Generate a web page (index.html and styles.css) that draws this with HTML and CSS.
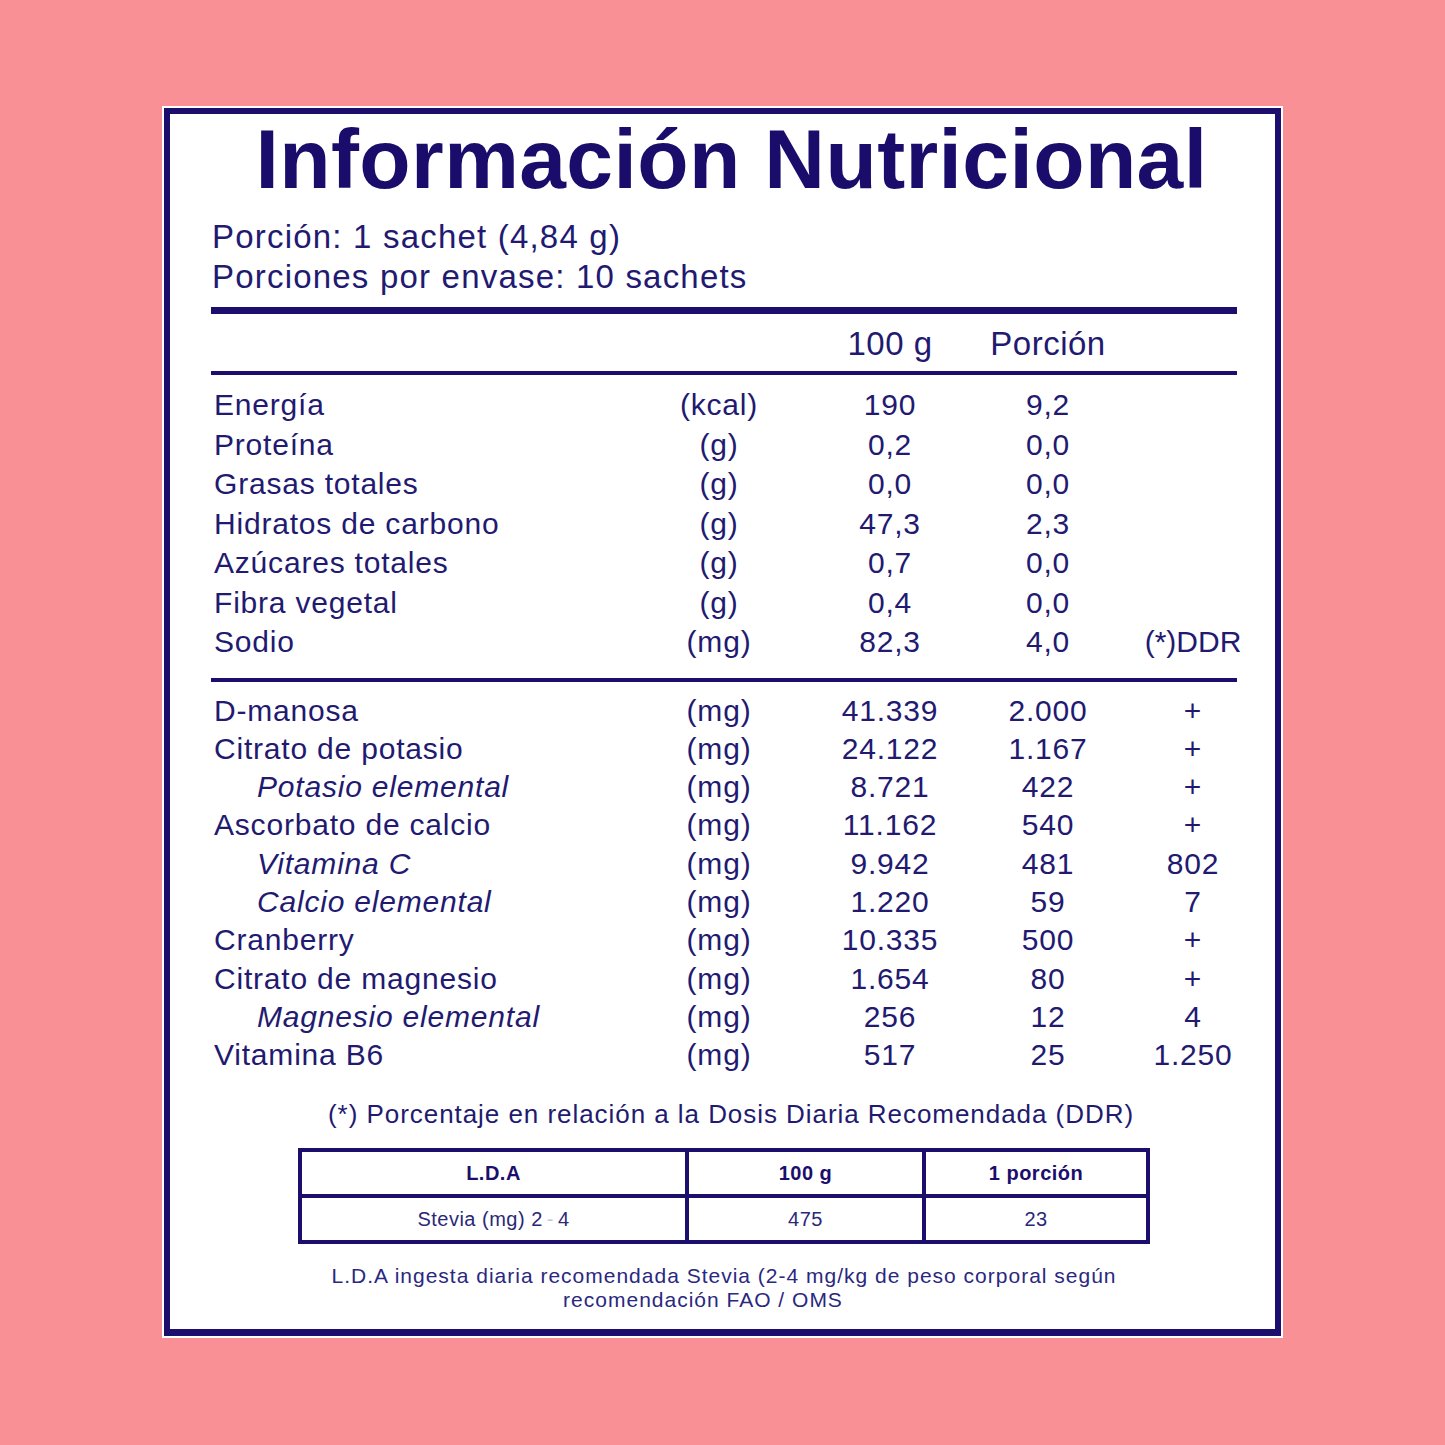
FILE: index.html
```html
<!DOCTYPE html>
<html lang="es">
<head>
<meta charset="utf-8">
<title>Información Nutricional</title>
<link rel="stylesheet" href="styles.css">
</head>
<body>
<div class="card">
  <div class="panel">
    <h1 class="title">Información Nutricional</h1>
    <div class="serving">
      <p>Porción: 1 sachet (4,84 g)</p>
      <p>Porciones por envase: 10 sachets</p>
    </div>
    <div class="rule thick"></div>
    <div class="row head"><span class="c-a">100 g</span><span class="c-p">Porción</span></div>
    <div class="rule"></div>
    <div class="section s1">
      <div class="row"><span class="c-n">Energía</span><span class="c-u">(kcal)</span><span class="c-a">190</span><span class="c-p">9,2</span></div>
      <div class="row"><span class="c-n">Proteína</span><span class="c-u">(g)</span><span class="c-a">0,2</span><span class="c-p">0,0</span></div>
      <div class="row"><span class="c-n">Grasas totales</span><span class="c-u">(g)</span><span class="c-a">0,0</span><span class="c-p">0,0</span></div>
      <div class="row"><span class="c-n">Hidratos de carbono</span><span class="c-u">(g)</span><span class="c-a">47,3</span><span class="c-p">2,3</span></div>
      <div class="row"><span class="c-n">Azúcares totales</span><span class="c-u">(g)</span><span class="c-a">0,7</span><span class="c-p">0,0</span></div>
      <div class="row"><span class="c-n">Fibra vegetal</span><span class="c-u">(g)</span><span class="c-a">0,4</span><span class="c-p">0,0</span></div>
      <div class="row"><span class="c-n">Sodio</span><span class="c-u">(mg)</span><span class="c-a">82,3</span><span class="c-p">4,0</span><span class="c-d ddr">(*)DDR</span></div>
    </div>
    <div class="rule"></div>
    <div class="section s2">
      <div class="row"><span class="c-n">D-manosa</span><span class="c-u">(mg)</span><span class="c-a">41.339</span><span class="c-p">2.000</span><span class="c-d">+</span></div>
      <div class="row"><span class="c-n">Citrato de potasio</span><span class="c-u">(mg)</span><span class="c-a">24.122</span><span class="c-p">1.167</span><span class="c-d">+</span></div>
      <div class="row"><span class="c-n sub">Potasio elemental</span><span class="c-u">(mg)</span><span class="c-a">8.721</span><span class="c-p">422</span><span class="c-d">+</span></div>
      <div class="row"><span class="c-n">Ascorbato de calcio</span><span class="c-u">(mg)</span><span class="c-a">11.162</span><span class="c-p">540</span><span class="c-d">+</span></div>
      <div class="row"><span class="c-n sub">Vitamina C</span><span class="c-u">(mg)</span><span class="c-a">9.942</span><span class="c-p">481</span><span class="c-d">802</span></div>
      <div class="row"><span class="c-n sub">Calcio elemental</span><span class="c-u">(mg)</span><span class="c-a">1.220</span><span class="c-p">59</span><span class="c-d">7</span></div>
      <div class="row"><span class="c-n">Cranberry</span><span class="c-u">(mg)</span><span class="c-a">10.335</span><span class="c-p">500</span><span class="c-d">+</span></div>
      <div class="row"><span class="c-n">Citrato de magnesio</span><span class="c-u">(mg)</span><span class="c-a">1.654</span><span class="c-p">80</span><span class="c-d">+</span></div>
      <div class="row"><span class="c-n sub">Magnesio elemental</span><span class="c-u">(mg)</span><span class="c-a">256</span><span class="c-p">12</span><span class="c-d">4</span></div>
      <div class="row"><span class="c-n">Vitamina B6</span><span class="c-u">(mg)</span><span class="c-a">517</span><span class="c-p">25</span><span class="c-d">1.250</span></div>
    </div>
    <p class="note">(*) Porcentaje en relación a la Dosis Diaria Recomendada (DDR)</p>
    <div class="lda">
      <div class="cell th">L.D.A</div>
      <div class="cell th">100 g</div>
      <div class="cell th">1 porción</div>
      <div class="cell">Stevia (mg) 2 <span class="faint">-</span> 4</div>
      <div class="cell">475</div>
      <div class="cell">23</div>
    </div>
    <p class="foot">L.D.A ingesta diaria recomendada Stevia (2-4 mg/kg de peso corporal según<br><span class="foot-2">recomendación FAO / OMS</span></p>
  </div>
</div>
</body>
</html>
```

FILE: styles.css
```css
html, body {
  margin: 0;
  padding: 0;
}
body {
  background: #f99096;
  width: 1445px;
  height: 1445px;
  font-family: "Liberation Sans", Arial, Helvetica, sans-serif;
  color: #221a70;
}
p { margin: 0; }

.card {
  margin: 106px 0 0 162px;
  width: 1117px;
  padding: 2px;
  background: #ffffff;
}
.panel {
  border: 6px solid #1b0e6c;
  border-bottom-width: 7px;
  padding: 3px 38px 17px 41px;
  background: #ffffff;
}

.title {
  margin: 0;
  padding-left: 15px;
  text-align: center;
  font-size: 84px;
  line-height: 84px;
  font-weight: 700;
  letter-spacing: 0.4px;
  color: #1a0c6b;
}

.serving {
  margin-top: 16px;
  font-size: 33px;
  line-height: 40px;
  letter-spacing: 1.2px;
  padding-left: 1px;
}

.rule {
  height: 4px;
  background: #1b0e6c;
}
.rule.thick {
  margin-top: 10px;
  height: 7px;
}

.row {
  display: grid;
  grid-template-columns: 448px 120px 51px 120px 38px 120px 25px 120px;
  white-space: nowrap;
}
.c-n { grid-column: 1; padding-left: 3px; }
.c-u { grid-column: 2; text-align: center; }
.c-a { grid-column: 4; text-align: center; }
.c-p { grid-column: 6; text-align: center; }
.c-d { grid-column: 8; text-align: center; }
.c-n.sub { padding-left: 46px; font-style: italic; }

.row.head {
  padding: 10px 0 7px;
  font-size: 33px;
  line-height: 40px;
  letter-spacing: 0.5px;
}

.section {
  font-size: 30px;
  letter-spacing: 0.8px;
}
.s1 {
  padding: 10px 0 16px;
  line-height: 39.5px;
}
.s2 {
  padding: 10px 0 0;
  line-height: 38.3px;
}
.ddr { letter-spacing: 0; }

.note {
  margin-top: 25px;
  text-align: center;
  font-size: 26px;
  line-height: 30px;
  letter-spacing: 0.95px;
  padding-left: 14px;
}

.lda {
  width: 844px;
  margin: 19px auto 0;
  display: grid;
  grid-template-columns: 383px 233px 220px;
  grid-template-rows: 42px 42px;
  gap: 4px;
  padding: 4px;
  background: #1b0e6c;
}
.cell {
  background: #ffffff;
  display: flex;
  align-items: center;
  justify-content: center;
  font-size: 20px;
  letter-spacing: 0.5px;
  color: #2a2878;
}
.cell.th {
  font-weight: 700;
  color: #1b0e6c;
}
.faint {
  color: #c8c8d8;
  margin: 0 4px;
}

.foot {
  margin-top: 20px;
  text-align: center;
  font-size: 21px;
  line-height: 24px;
  letter-spacing: 1px;
  color: #2a2880;
}
.foot-2 {
  display: inline-block;
  margin-right: 42px;
}
```
